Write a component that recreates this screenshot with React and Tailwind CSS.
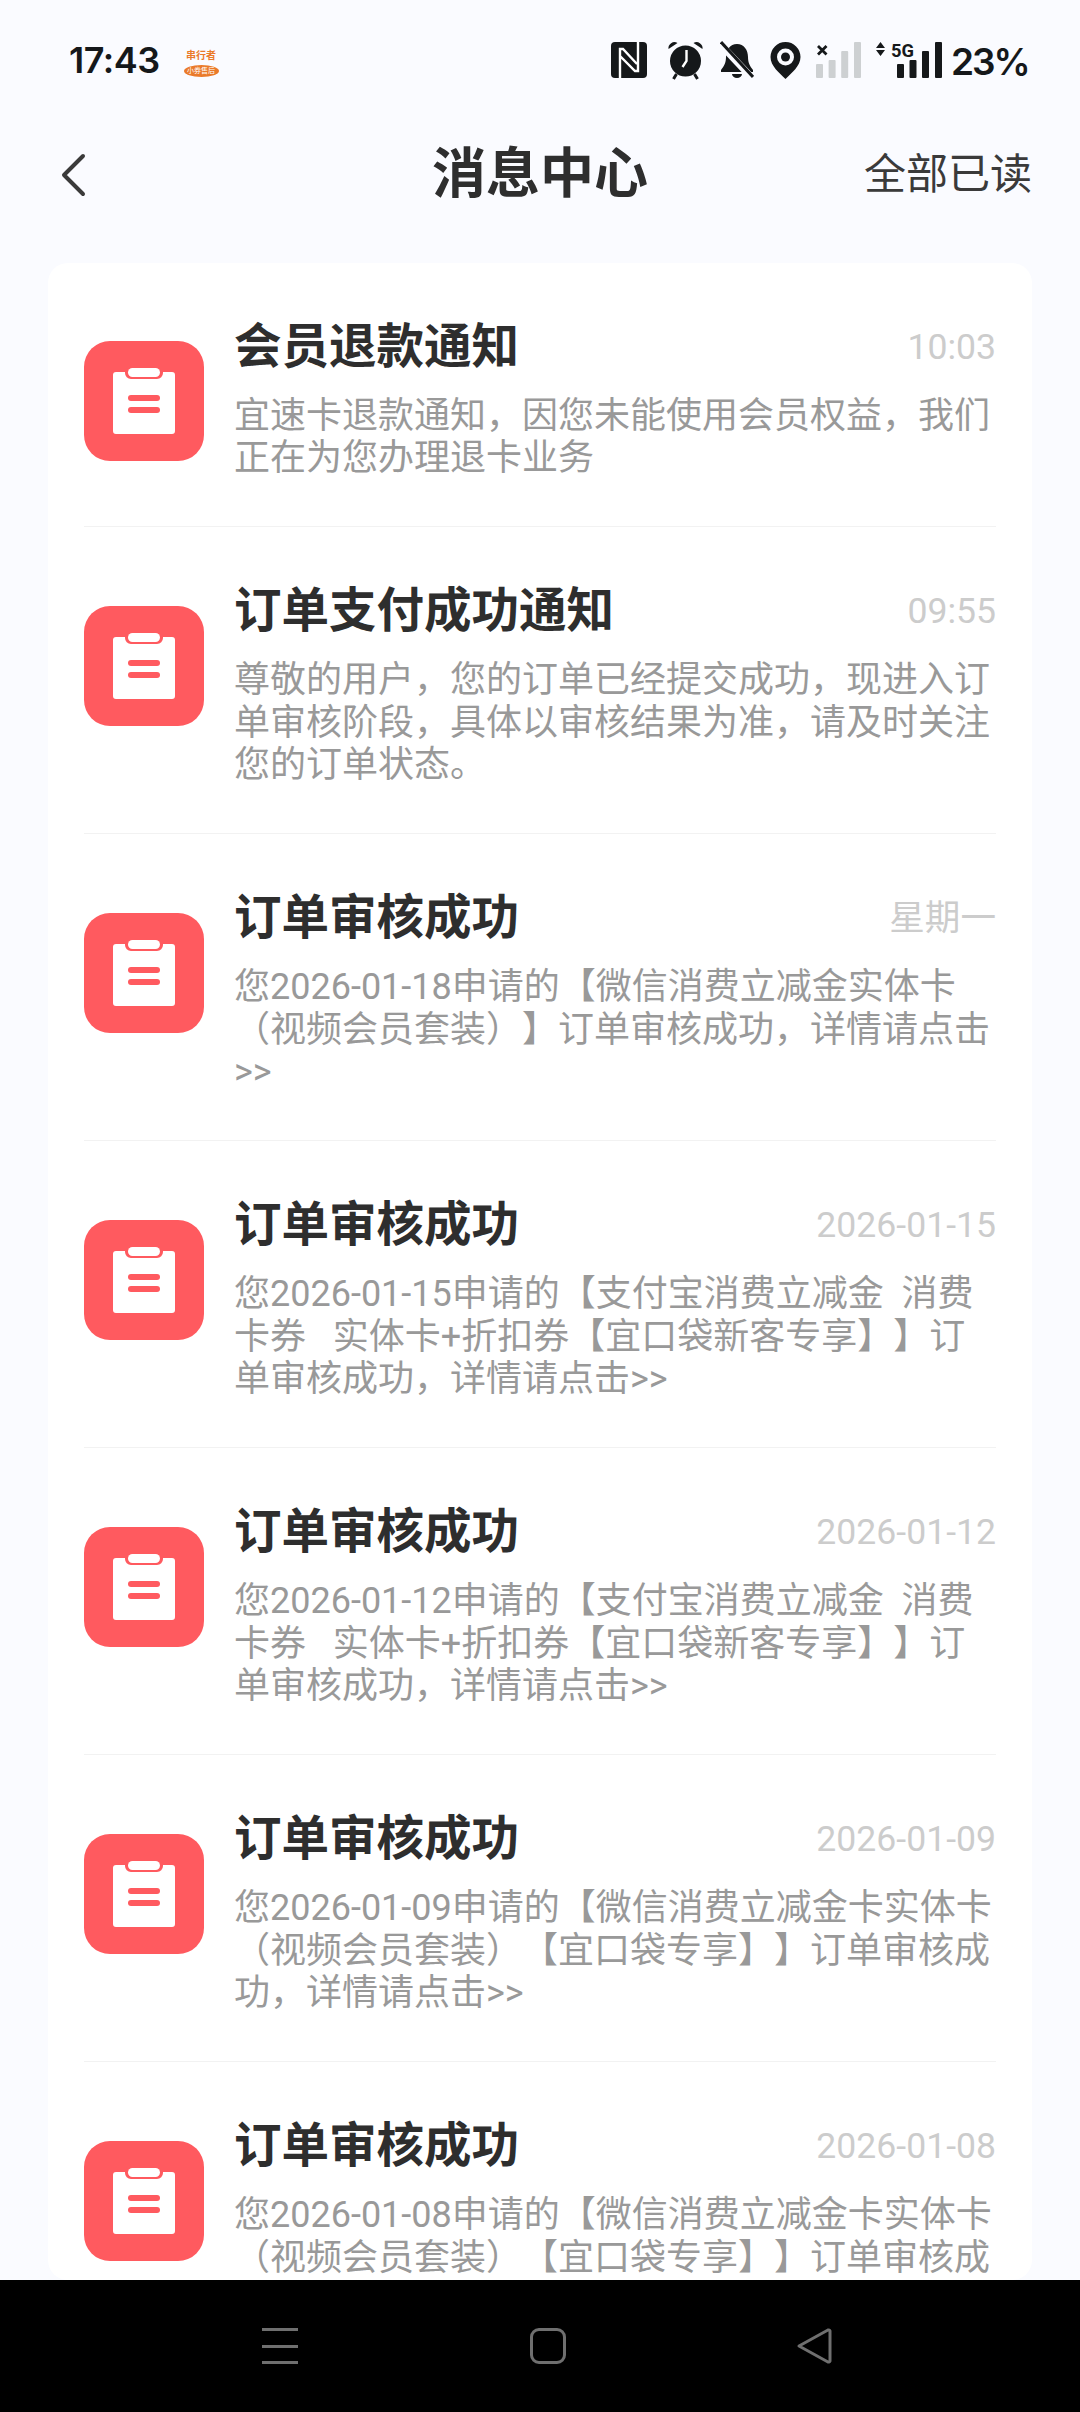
const rows = [
  { t: "会员退款通知", time: "10:03", lines: ["宜速卡退款通知，因您未能使用会员权益，我们", "正在为您办理退卡业务"] },
  { t: "订单支付成功通知", time: "09:55", lines: ["尊敬的用户，您的订单已经提交成功，现进入订", "单审核阶段，具体以审核结果为准，请及时关注", "您的订单状态。"] },
  { t: "订单审核成功", time: "星期一", lines: ["您2026-01-18申请的【微信消费立减金实体卡", "（视频会员套装）】订单审核成功，详情请点击", ">>"] },
  { t: "订单审核成功", time: "2026-01-15", lines: ["您2026-01-15申请的【支付宝消费立减金  消费", "卡券   实体卡+折扣券【宜口袋新客专享】】订", "单审核成功，详情请点击>>"] },
  { t: "订单审核成功", time: "2026-01-12", lines: ["您2026-01-12申请的【支付宝消费立减金  消费", "卡券   实体卡+折扣券【宜口袋新客专享】】订", "单审核成功，详情请点击>>"] },
  { t: "订单审核成功", time: "2026-01-09", lines: ["您2026-01-09申请的【微信消费立减金卡实体卡", "（视频会员套装）【宜口袋专享】】订单审核成", "功，详情请点击>>"] },
  { t: "订单审核成功", time: "2026-01-08", lines: ["您2026-01-08申请的【微信消费立减金卡实体卡", "（视频会员套装）【宜口袋专享】】订单审核成", "功，详情请点击>>"] },
];

function RowIcon() {
  return (
    <div className="w-[120px] h-[120px] shrink-0 mt-[78.5px] rounded-[26px] bg-[#ff5a5f] flex items-center justify-center">
      <svg width="64" height="68" viewBox="0 0 64 68">
        <path fill="#fff" d="M4 5h9v1a6 6 0 0 0 6 6h26a6 6 0 0 0 6-6V5h9a3 3 0 0 1 3 3v56a3 3 0 0 1-3 3H4a3 3 0 0 1-3-3V8a3 3 0 0 1 3-3z" />
        <rect x="16" y="1" width="32" height="9" rx="4.5" fill="#fff" />
        <rect x="16" y="28" width="32" height="6" rx="3" fill="#ff5a5f" />
        <rect x="16" y="40" width="32" height="6" rx="3" fill="#ff5a5f" />
      </svg>
    </div>
  );
}

function Row({ r, last }) {
  return (
    <div className={"flex gap-[30px] shrink-0 " + (last ? "" : "border-b border-[#f2f2f2]")}>
      <RowIcon />
      <div className="flex-1 min-w-0 pt-[56px] pb-[46.5px]">
        <div className="flex justify-between items-center h-[56px]">
          <span className="text-[47.5px] font-bold text-[#2e2e2e] leading-[56px]">{r.t}</span>
          <span className="text-[35.6px] text-[#cccccc] leading-[56px]">{r.time}</span>
        </div>
        <div className="mt-[20px] text-[36px] leading-[42.5px] text-[#999999] whitespace-pre">
          {r.lines.map((l, i) => <div key={i}>{l}</div>)}
        </div>
      </div>
    </div>
  );
}

function StatusIcons() {
  return (
    <div className="flex items-center h-[40px] text-[#15181a]">
      <svg width="36" height="38" viewBox="0 0 36 38" className="mr-[20px]">
        <rect x="0" y="1" width="36" height="36" rx="4" fill="#15181a" />
        <path d="M9 37V8h3l14 15M27 1v29h-3L9 15" fill="none" stroke="#fff" strokeWidth="2.4" />
      </svg>
      <svg width="37" height="40" viewBox="0 0 36 40" className="mr-[16px]">
        <circle cx="18" cy="21" r="15.5" fill="#15181a" />
        <path d="M1 9a6 6 0 0 1 9-6zM35 9a6 6 0 0 0-9-6z" fill="#15181a" />
        <path d="M9 34l-3 5M27 34l3 5" stroke="#15181a" strokeWidth="3" />
        <path d="M19 10v11l-4 6" fill="none" stroke="#fff" strokeWidth="2.4" />
      </svg>
      <svg width="34" height="38" viewBox="0 0 34 38" className="mr-[16px]">
        <path d="M17 3c7 0 11 6 11 13 0 6 2 9 5 13v2H1v-2c3-4 5-7 5-13 0-7 4-13 11-13z" fill="#15181a" />
        <path d="M12 33h10a5 4 0 0 1-10 0z" fill="#15181a" />
        <path d="M0 3l32 34" stroke="#fafbff" strokeWidth="7" />
        <path d="M1 1l32 35" stroke="#15181a" strokeWidth="3" />
      </svg>
      <svg width="31" height="38" viewBox="0 0 30 38" className="mr-[15px]">
        <path d="M15 1a15 15 0 0 1 15 15c0 9-9 16-15 22C9 32 0 25 0 16A15 15 0 0 1 15 1z" fill="#15181a" />
        <circle cx="15" cy="16" r="8.5" fill="#fafbff" />
        <circle cx="15" cy="16" r="4.5" fill="#15181a" />
      </svg>
      <svg width="45" height="38" viewBox="0 0 45 38" className="mr-[15px]">
        <path d="M2 5l8.5 8.5M10.5 5L2 13.5" stroke="#15181a" strokeWidth="2.8" />
        <rect x="0" y="23" width="7" height="14" rx="1" fill="#cdd0d2" />
        <rect x="12.6" y="19" width="7" height="18" rx="1" fill="#cdd0d2" />
        <rect x="25.2" y="10" width="7" height="27" rx="1" fill="#cdd0d2" />
        <rect x="38" y="1" width="7" height="36" rx="1" fill="#cdd0d2" />
      </svg>
      <svg width="66" height="38" viewBox="0 0 66 38" className="mr-[9px]">
        <path d="M4.5 1l4.5 6H0zM4.5 15l4.5-6H0z" fill="#15181a" />
        <text x="15" y="16" fontSize="18" fontWeight="700" fill="#15181a" textLength="23" lengthAdjust="spacingAndGlyphs" style={{ fontFamily: "Roboto" }}>5G</text>
        <rect x="21" y="23" width="7" height="14" rx="1" fill="#15181a" />
        <rect x="33.5" y="19" width="7" height="18" rx="1" fill="#15181a" />
        <rect x="46" y="10" width="7" height="27" rx="1" fill="#15181a" />
        <rect x="59" y="1" width="7" height="36" rx="1" fill="#15181a" />
      </svg>
      <span className="text-[37px] font-semibold font-['Inter',sans-serif] leading-[40px] tracking-[-2px] w-[75px] whitespace-nowrap mt-[3px]">23%</span>
    </div>
  );
}

export default function App() {
  return (
    <div className="w-[1080px] h-[2412px] bg-[#fafbff] overflow-hidden flex flex-col font-['Roboto','Noto_Sans_CJK_SC',sans-serif] [text-spacing-trim:space-all] [font-feature-settings:'chws'_0]">
      <div className="h-[120px] shrink-0 flex items-center justify-between pl-[69px] pr-[54px]">
        <div className="flex items-center">
          <span className="w-[90px] text-[36px] font-semibold text-[#15181a] font-['Inter',sans-serif] leading-[40px] tracking-[-0.5px] whitespace-nowrap">17:43</span>
          <div className="ml-[24px] w-[36px] flex flex-col items-center mt-[6px]">
            <span className="text-[10px] leading-[12px] font-bold text-[#ea7a2a] whitespace-nowrap">串行者</span>
            <span className="mt-[3px] w-[35px] h-[12px] rounded-[50%] bg-[#ea7a2a] text-[7px] leading-[12px] text-center text-white whitespace-nowrap">小券售后</span>
          </div>
        </div>
        <StatusIcons />
      </div>
      <div className="h-[110px] shrink-0 flex items-center justify-between relative pl-[61px] pr-[48px]">
        <svg width="26" height="44" viewBox="0 0 26 44"><path d="M22 3L3 22l19 19" fill="none" stroke="#3a3a3a" strokeWidth="4" strokeLinecap="round" strokeLinejoin="round" /></svg>
        <span className="absolute left-[420px] w-[240px] text-center text-[54px] font-bold text-[#2e2e2e] leading-[110px]">消息中心</span>
        <span className="text-[42px] text-[#3a3a3a] leading-[110px]">全部已读</span>
      </div>
      <div className="mt-[32.5px] mx-[48px] flex-1 min-h-0 overflow-hidden bg-white rounded-[20px] px-[36px] flex flex-col">
        {rows.map((r, i) => <Row key={i} r={r} last={i === rows.length - 1} />)}
      </div>
      <div className="h-[132px] shrink-0 bg-black relative">
        <div className="absolute left-[262px] top-[48px] w-[36px] flex flex-col gap-[13.5px]">
          <div className="h-[3px] bg-[#6f6f6f]" /><div className="h-[3px] bg-[#6f6f6f]" /><div className="h-[3px] bg-[#6f6f6f]" />
        </div>
        <div className="absolute left-[530px] top-[48px] w-[36px] h-[36px] rounded-[9px] border-[3px] border-[#6f6f6f]" />
        <svg className="absolute left-[796px] top-[46px]" width="36" height="40" viewBox="0 0 36 40">
          <path d="M3 20L32 4a1.5 1.5 0 0 1 2 1v30a1.5 1.5 0 0 1-2 1z" fill="none" stroke="#6f6f6f" strokeWidth="3" strokeLinejoin="round" />
        </svg>
      </div>
    </div>
  );
}
